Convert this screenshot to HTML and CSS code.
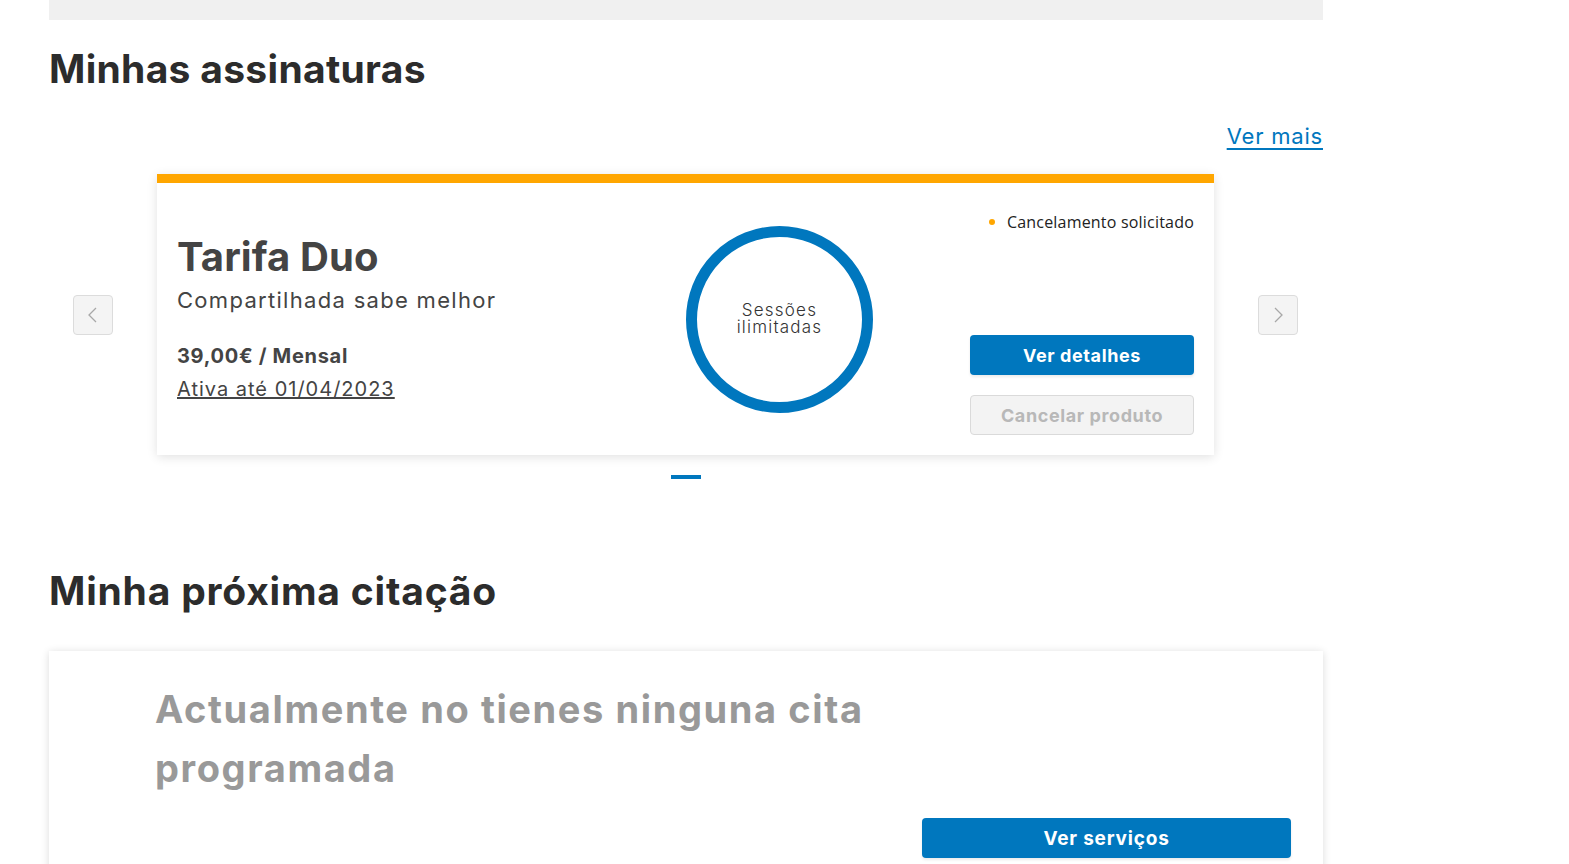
FILE: index.html
```html
<!DOCTYPE html>
<html lang="pt">
<head>
<meta charset="utf-8">
<title>Minhas assinaturas</title>
<link rel="stylesheet" href="styles.css">
</head>
<body>
<div class="page">
  <div class="topbar"></div>

  <section class="subs">
    <h1 class="section-title">Minhas assinaturas</h1>
    <div class="more-row"><a class="more-link" href="#">Ver mais</a></div>

    <div class="carousel">
      <button class="arrow" aria-label="Anterior">
        <svg width="14" height="20" viewBox="0 0 14 20"><path d="M10 3 L3 10 L10 17" fill="none" stroke="#a8a8a8" stroke-width="1.3"/></svg>
      </button>

      <div class="sub-card">
        <div class="sub-info">
          <div class="sub-name">Tarifa Duo</div>
          <div class="sub-tagline">Compartilhada sabe melhor</div>
          <div class="sub-price">39,00€ / Mensal</div>
          <a class="sub-until" href="#">Ativa até 01/04/2023</a>
        </div>
        <div class="ring">
          <span class="ring-text">Sessões<br>ilimitadas</span>
        </div>
        <div class="sub-actions">
          <div class="status"><span class="status-dot"></span>Cancelamento solicitado</div>
          <div class="buttons">
            <button class="btn btn-primary">Ver detalhes</button>
            <button class="btn btn-disabled">Cancelar produto</button>
          </div>
        </div>
      </div>

      <button class="arrow" aria-label="Seguinte">
        <svg width="14" height="20" viewBox="0 0 14 20"><path d="M4 3 L11 10 L4 17" fill="none" stroke="#a8a8a8" stroke-width="1.3"/></svg>
      </button>
    </div>

    <div class="dots"><span class="dot active"></span></div>
  </section>

  <section class="appointments">
    <h2 class="section-title">Minha próxima citação</h2>
    <div class="appt-card">
      <p class="appt-empty">Actualmente no tienes ninguna cita<br>programada</p>
      <div class="appt-actions">
        <button class="btn btn-primary btn-wide">Ver serviços</button>
      </div>
    </div>
  </section>
</div>
</body>
</html>
```

FILE: styles.css
```css
* { box-sizing: border-box; }

html, body {
  margin: 0;
  padding: 0;
  background: #fff;
  overflow: hidden;
}

body {
  font-family: "Inter", "Open Sans", sans-serif;
  color: #333;
}

.page {
  width: 1274px;
  margin-left: 49px;
}

.topbar {
  height: 20px;
  background: #f0f0f0;
}

.section-title {
  margin: 0;
  font-size: 39px;
  font-weight: 700;
  color: #2c2c2c;
  line-height: 46px;
  letter-spacing: 0.3px;
}

.subs .section-title {
  margin-top: 26px;
}

.more-row {
  display: flex;
  justify-content: flex-end;
  margin-top: 31px;
  height: 28px;
}

.more-link {
  font-size: 22px;
  color: #0077be;
  text-decoration: underline;
  text-underline-offset: 4px;
  line-height: 26px;
  letter-spacing: 0.8px;
}

.carousel {
  display: flex;
  align-items: center;
  justify-content: space-between;
  padding: 0 25px 0 24px;
  margin-top: 23px;
}

.arrow {
  width: 40px;
  height: 40px;
  padding: 0;
  border: 1px solid #dcdcdc;
  border-radius: 4px;
  background: #f4f4f4;
  display: flex;
  align-items: center;
  justify-content: center;
}

.sub-card {
  width: 1057px;
  height: 281px;
  border-top: 9px solid #ffa600;
  background: #fff;
  box-shadow: 0 2px 10px rgba(0, 0, 0, 0.12);
  display: flex;
  align-items: stretch;
  padding: 0 20px 20px 20px;
}

.sub-info {
  width: 509px;
  display: flex;
  flex-direction: column;
  color: #444;
  padding-top: 52px;
}

.sub-name {
  font-size: 40px;
  font-weight: 700;
  line-height: 44px;
  color: #444;
  letter-spacing: 0.1px;
}

.sub-tagline {
  font-size: 22px;
  line-height: 28px;
  margin-top: 7px;
  color: #444;
  letter-spacing: 1.3px;
}

.sub-price {
  font-size: 20px;
  font-weight: 700;
  line-height: 24px;
  margin-top: 30px;
  letter-spacing: 0.7px;
}

.sub-until {
  font-size: 20px;
  line-height: 26px;
  margin-top: 8px;
  color: #444;
  text-decoration: underline;
  align-self: flex-start;
  letter-spacing: 1px;
}

.ring {
  width: 187px;
  height: 187px;
  border: 11px solid #0077be;
  border-radius: 50%;
  align-self: center;
  margin-top: 20px;
  display: flex;
  align-items: center;
  justify-content: center;
  text-align: center;
}

.ring-text {
  font-size: 17px;
  line-height: 17px;
  color: #333;
  font-weight: 300;
  letter-spacing: 1.2px;
}

.sub-actions {
  margin-left: auto;
  width: 224px;
  display: flex;
  flex-direction: column;
  justify-content: space-between;
  padding-top: 29px;
}

.status {
  font-family: "Open Sans", sans-serif;
  font-size: 16px;
  color: #222;
  display: flex;
  align-items: center;
  justify-content: flex-end;
  line-height: 20px;
  letter-spacing: 0.2px;
}

.status-dot {
  width: 6px;
  height: 6px;
  border-radius: 50%;
  background: #ffa600;
  margin-right: 12px;
}

.buttons {
  display: flex;
  flex-direction: column;
  gap: 20px;
}

.btn {
  font-family: inherit;
  height: 40px;
  border-radius: 4px;
  font-size: 18px;
  font-weight: 700;
  letter-spacing: 0.6px;
  cursor: pointer;
}

.btn-primary {
  background: #0077be;
  color: #fff;
  border: none;
  box-shadow: 0 2px 3px rgba(0, 0, 0, 0.08);
}

.btn-disabled {
  background: #f3f3f3;
  color: #b8b8b8;
  border: 1px solid #dadada;
}

.dots {
  display: flex;
  justify-content: center;
  margin-top: 20px;
}

.dot {
  width: 30px;
  height: 4px;
  background: #0077be;
}

.appointments .section-title {
  margin-top: 89px;
  letter-spacing: 0.8px;
}

.appt-card {
  margin-top: 37px;
  background: #fff;
  box-shadow: 0 1px 8px rgba(0, 0, 0, 0.14);
  padding: 29px 32px 8px 106px;
  height: 230px;
}

.appt-empty {
  margin: 0;
  font-size: 38px;
  font-weight: 700;
  line-height: 59px;
  color: #999;
  letter-spacing: 1.6px;
}

.appt-actions {
  display: flex;
  justify-content: flex-end;
  margin-top: 20px;
}

.btn-wide {
  width: 369px;
  font-size: 19px;
  letter-spacing: 0.8px;
}
```
